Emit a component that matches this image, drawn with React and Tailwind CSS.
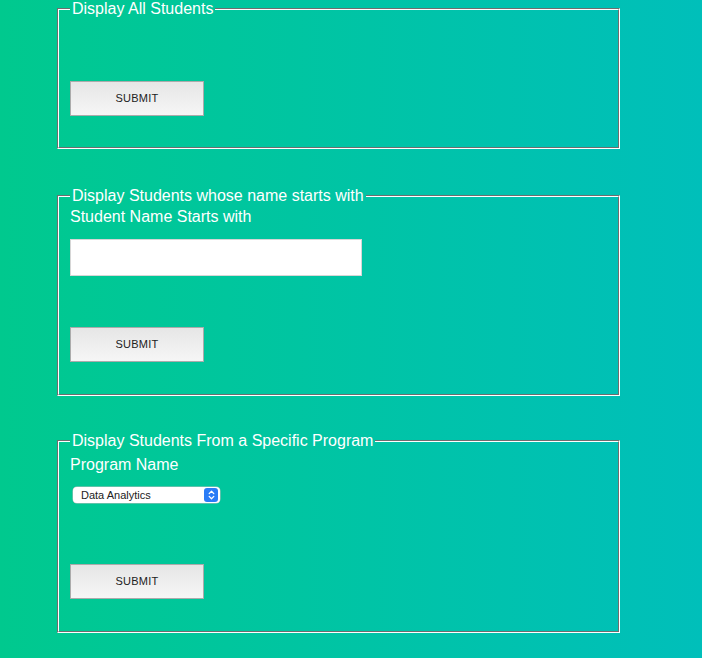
import { useState } from 'react';

const SubmitButton = () => (
  <button
    type="button"
    className="block w-[134px] h-[35px] border border-[#ababab] bg-gradient-to-b from-[#e6e6e6] to-[#f6f6f6] text-[11px] text-[#222] tracking-wide"
  >
    SUBMIT
  </button>
);

// groove border: outer ring gray/white, inner ring white/gray
const Box = ({ title, className = '', children }) => (
  <fieldset
    className={`w-[563px] border border-t-[#6e6e6e] border-l-[#6e6e6e] border-r-white border-b-white ${className}`}
  >
    <legend className="ml-[12px] px-[2px] text-[16px] leading-[17px] text-white">{title}</legend>
    <fieldset className="-mt-[16px] border border-t-white border-l-white border-r-[#6e6e6e] border-b-[#6e6e6e] pl-[11px]">
      <legend className="px-[2px] text-[16px] leading-[17px] text-transparent select-none">
        {title}
      </legend>
      {children}
    </fieldset>
  </fieldset>
);

const App = () => {
  const [name, setName] = useState('');
  const [program, setProgram] = useState('Data Analytics');

  return (
    <div className="min-h-[658px] bg-gradient-to-r from-[#00c98e] to-[#00bfba] pl-[57px] font-['Liberation_Sans',Arial,sans-serif]">
      <div className="flex flex-col">
        <Box title="Display All Students">
          <div className="pt-[63px] pb-[31px]">
            <SubmitButton />
          </div>
        </Box>

        <Box title="Display Students whose name starts with" className="mt-[38px]">
          <div className="pt-[3px] pb-[32px]">
            <label className="block text-[16px] leading-[17px] text-white">Student Name Starts with</label>
            <input
              value={name}
              onChange={(e) => setName(e.target.value)}
              className="mt-[14px] block w-[292px] h-[37px] bg-white border border-[#d6d6d6] outline-none px-2"
            />
            <div className="mt-[51px]">
              <SubmitButton />
            </div>
          </div>
        </Box>

        <Box title="Display Students From a Specific Program" className="mt-[36px]">
          <div className="pt-[6px] pb-[32px]">
            <label className="block text-[16px] leading-[17px] text-white">Program Name</label>
            <div className="relative mt-[14px] ml-[3px] w-[147px] h-[16px]">
              <select
                value={program}
                onChange={(e) => setProgram(e.target.value)}
                className="block appearance-none w-full h-[16px] rounded-[4px] bg-white pl-[8px] py-0 text-[11px] leading-[16px] text-[#222] shadow-[0_0_0_0.5px_#bdbdbd] outline-none"
              >
                <option>Data Analytics</option>
                <option>Computer Programming</option>
                <option>Web Development</option>
              </select>
              <span className="pointer-events-none absolute right-[2px] top-[1px] flex h-[14px] w-[14px] items-center justify-center rounded-[3px] bg-[#2a7cf6]">
                <svg width="7" height="10" viewBox="0 0 7 10" fill="none" stroke="white" strokeWidth="1.3" strokeLinecap="round" strokeLinejoin="round">
                  <path d="M1.2 3.6 L3.5 1.3 L5.8 3.6" />
                  <path d="M1.2 6.4 L3.5 8.7 L5.8 6.4" />
                </svg>
              </span>
            </div>
            <div className="mt-[61px]">
              <SubmitButton />
            </div>
          </div>
        </Box>
      </div>
    </div>
  );
};

export default App;
